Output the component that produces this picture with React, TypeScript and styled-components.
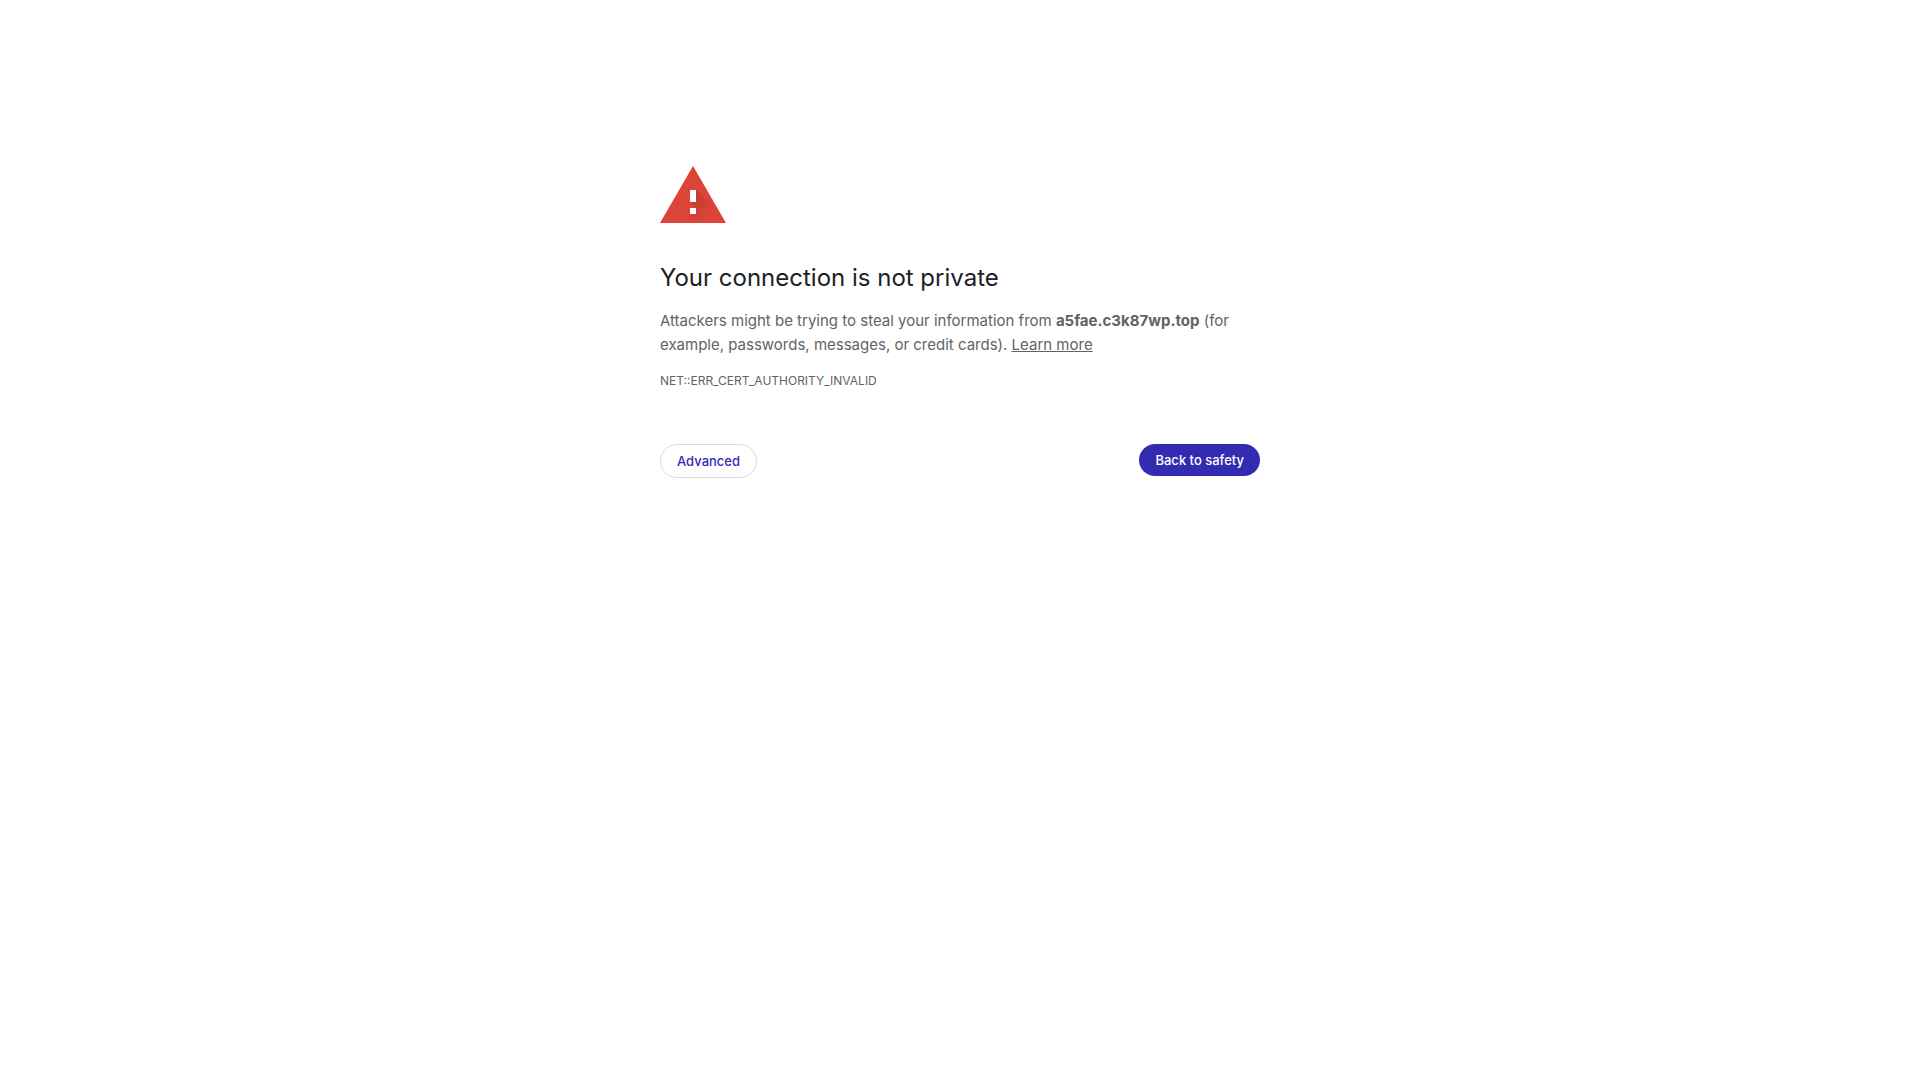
import React from "react";
import styled, { createGlobalStyle, css } from "styled-components";

const GlobalStyle = createGlobalStyle`
  body {
    margin: 0;
    background: #fff;
    color: #5f6368;
    font-family: Inter, "Liberation Sans", sans-serif;
    font-size: 15px;
    line-height: 24px;
  }
`;

const Interstitial = styled.main`
  box-sizing: border-box;
  width: 100%;
  max-width: 600px;
  margin: 14vh auto 0;
`;

const WarningIcon = styled.svg`
  display: block;
  width: 72px;
  height: 72px;
  margin-bottom: 40px;
`;

const Title = styled.h1`
  margin: 0 0 16px;
  color: #202124;
  font-size: 24px;
  font-weight: 400;
  line-height: 30px;
`;

const Message = styled.p`
  margin: 0;
`;

const Host = styled.strong`
  font-weight: 700;
`;

const LearnMore = styled.a`
  color: #5f6368;
  text-decoration: underline;
`;

const ErrorCode = styled.p`
  margin: 12px 0 0;
  font-size: 12px;
`;

const Actions = styled.div`
  display: flex;
  flex-wrap: wrap;
  align-items: flex-start;
  justify-content: space-between;
  gap: 12px;
  margin-top: 51px;
`;

const Button = styled.button<{ $primary?: boolean }>`
  padding: 8px 16px;
  border: 1px solid #dadce0;
  border-radius: 20px;
  background: #fff;
  color: #342bb3;
  font: 500 13px/16px Inter, "Liberation Sans", sans-serif;
  cursor: pointer;

  ${({ $primary }) =>
    $primary &&
    css`
      border: 0;
      background: #342bb3;
      color: #fff;
    `}
`;

export default function App() {
  return (
    <>
      <GlobalStyle />
      <Interstitial>
        <WarningIcon viewBox="0 0 72 72" aria-hidden="true">
          <defs>
            <linearGradient id="shade" x1="33" y1="45" x2="51" y2="63" gradientUnits="userSpaceOnUse">
              <stop offset="0" stopColor="#3e2723" stopOpacity="0.2" />
              <stop offset="1" stopColor="#3e2723" stopOpacity="0" />
            </linearGradient>
          </defs>
          <path d="M0 72h66L33 15z" fill="#db4437" />
          <path d="M36 39l24 24 5 9H39l-9-9h6v-6l-6-6h6z" fill="url(#shade)" />
          <path d="M30 39h6v12h-6zM30 57h6v6h-6z" fill="#fff" shapeRendering="crispEdges" />
        </WarningIcon>
        <Title>Your connection is not private</Title>
        <Message>
          Attackers might be trying to steal your information from <Host>a5fae.c3k87wp.top</Host> (for
          example, passwords, messages, or credit cards). <LearnMore href="#learn-more">Learn more</LearnMore>
        </Message>
        <ErrorCode>NET::ERR_CERT_AUTHORITY_INVALID</ErrorCode>
        <Actions>
          <Button type="button">Advanced</Button>
          <Button type="button" $primary>
            Back to safety
          </Button>
        </Actions>
      </Interstitial>
    </>
  );
}
